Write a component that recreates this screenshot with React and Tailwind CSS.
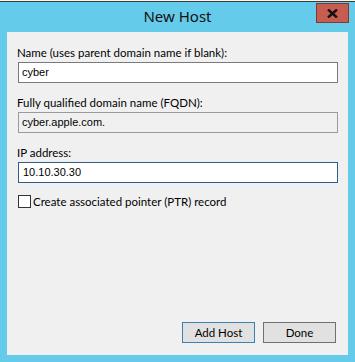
import React from "react";

export default function App() {
  return (
    <div className="w-[355px] h-[362px] bg-[#65cbea] flex flex-col overflow-hidden font-['Lato',sans-serif] text-black">
      {/* strip of the window behind */}
      <div className="h-[2px] bg-[#f4f4f4] border-b border-[#3a3a3a]" />

      {/* title bar */}
      <div className="relative h-[30px] flex items-center justify-center">
        <span className="text-[15px] leading-none text-[#111] -mt-[2px] font-['Noto_Sans',sans-serif]">New Host</span>
        <div className="absolute right-[6px] top-[1px] w-[33px] h-[20px] bg-[#c75c51] border border-[#7d3b35] flex items-center justify-center">
          <svg width="11" height="9" viewBox="0 0 11 9">
            <path d="M1 0.5 L10 8.5 M10 0.5 L1 8.5" stroke="#111" strokeWidth="2.4" />
          </svg>
        </div>
      </div>

      {/* body */}
      <div className="mx-[7px] mb-[7px] flex-1 bg-[#f0f0f0] flex flex-col pl-[10px] pr-[10px] pt-[13px] pb-[12px] text-[11.5px] leading-[15px]">
        <label>Name (uses parent domain name if blank):</label>
        <div className="mt-[2px] h-[21px] w-[320px] ml-[1px] bg-white border border-[#7a7a7a] flex items-center px-[3px] text-[11px] font-['Liberation_Sans',Arial,sans-serif]">
          cyber
        </div>

        <label className="mt-[12px]">Fully qualified domain name (FQDN):</label>
        <div className="mt-[2px] h-[21px] w-[320px] ml-[1px] bg-[#f0f0f0] border border-[#9a9a9a] flex items-center px-[3px] text-[11px] font-['Liberation_Sans',Arial,sans-serif]">
          cyber.apple.com.
        </div>

        <label className="mt-[12px]">IP address:</label>
        <div className="mt-[2px] h-[21px] w-[320px] ml-[1px] bg-white border border-[#2f5f8a] flex items-center px-[4px] text-[11px] font-['Liberation_Sans',Arial,sans-serif]">
          10.10.30.30
        </div>

        <div className="mt-[11px] ml-[1px] flex items-center gap-[2px]">
          <div className="w-[13px] h-[13px] bg-white border border-[#333]" />
          <span>Create associated pointer (PTR) record</span>
        </div>

        <div className="mt-auto flex justify-end gap-[8px] pr-[2px]">
          <button className="w-[73px] h-[21px] bg-[#e1e1e1] border border-[#3c7fb1] text-[11.5px] leading-none">
            Add Host
          </button>
          <button className="w-[73px] h-[21px] bg-[#e1e1e1] border border-[#707070] text-[11.5px] leading-none">
            Done
          </button>
        </div>
      </div>
    </div>
  );
}
